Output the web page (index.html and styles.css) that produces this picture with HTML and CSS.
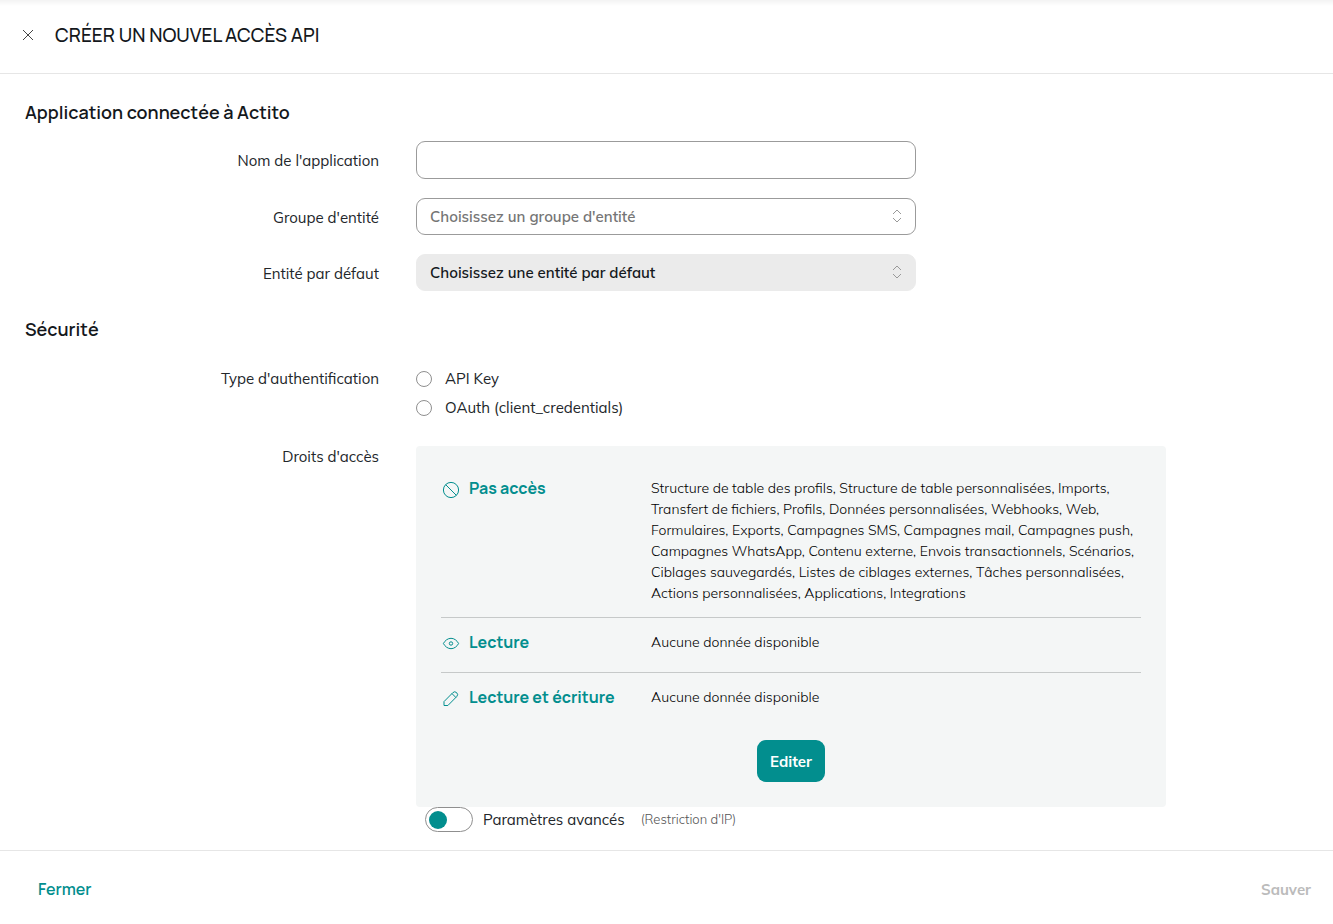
FILE: index.html
```
<!DOCTYPE html>
<html lang="fr">
<head>
    <meta charset="UTF-8">
    <meta name="viewport" content="width=device-width, initial-scale=1">
    <title>Créer un nouvel accès API</title>
    <link rel="stylesheet" href="styles.css">
</head>
<body>
<form class="page">
    <header class="header">
        <button type="button" class="close" aria-label="Fermer la fenêtre">
            <svg width="12" height="12" viewBox="0 0 12 12"><path d="M1 1l10 10M11 1L1 11"/></svg>
        </button>
        <h1>CRÉER UN NOUVEL ACCÈS API</h1>
    </header>

    <main class="content">
        <h2>Application connectée à Actito</h2>
        <div class="fields">
            <div class="row">
                <label class="label" for="name">Nom de l'application</label>
                <input type="text" id="name" class="control">
            </div>
            <div class="row">
                <label class="label" for="group">Groupe d'entité</label>
                <div class="select">
                    <select id="group" class="control">
                        <option>Choisissez un groupe d'entité</option>
                    </select>
                    <svg width="10" height="14" viewBox="0 0 10 14"><path d="M1 5l4-4 4 4M1 9l4 4 4-4"/></svg>
                </div>
            </div>
            <div class="row">
                <label class="label" for="entity">Entité par défaut</label>
                <div class="select">
                    <select id="entity" class="control" disabled>
                        <option>Choisissez une entité par défaut</option>
                    </select>
                    <svg width="10" height="14" viewBox="0 0 10 14"><path d="M1 5l4-4 4 4M1 9l4 4 4-4"/></svg>
                </div>
            </div>
        </div>

        <h2>Sécurité</h2>
        <div class="row auth" role="radiogroup" aria-labelledby="auth-label">
            <span class="label" id="auth-label">Type d'authentification</span>
            <div class="radios">
                <label><input type="radio" name="auth">API Key</label>
                <label><input type="radio" name="auth">OAuth (client_credentials)</label>
            </div>
        </div>
        <div class="row rights">
            <span class="label">Droits d'accès</span>
            <div>
                <div class="panel">
                    <dl>
                        <div class="right">
                            <dt>
                                <svg width="18" height="18" viewBox="0 0 18 18"><circle cx="9" cy="9" r="7.6"/><path d="M3.6 3.6l10.8 10.8"/></svg>
                                Pas accès
                            </dt>
                            <dd>Structure de table des profils, Structure de table personnalisées, Imports, Transfert de fichiers, Profils, Données personnalisées, Webhooks, Web, Formulaires, Exports, Campagnes SMS, Campagnes mail, Campagnes push, Campagnes WhatsApp, Contenu externe, Envois transactionnels, Scénarios, Ciblages sauvegardés, Listes de ciblages externes, Tâches personnalisées, Actions personnalisées, Applications, Integrations</dd>
                        </div>
                        <div class="right">
                            <dt>
                                <svg width="18" height="18" viewBox="0 0 18 18"><path d="M1.4 8.500C3 5.500 5.800 3.300 9 3.300S15 5.500 16.600 8.500C15 11.500 12.200 13.700 9 13.700S3 11.500 1.400 8.500z"/><circle cx="9" cy="8.500" r="1.700"/></svg>
                                Lecture
                            </dt>
                            <dd>Aucune donnée disponible</dd>
                        </div>
                        <div class="right">
                            <dt>
                                <svg width="18" height="18" viewBox="0 0 18 18"><path d="M2 15.500v-3.900L10.800 2.700a2.700 2.700 0 0 1 3.900 3.900L5.900 15.500zM10 3.600l3.900 3.900"/></svg>
                                Lecture et écriture
                            </dt>
                            <dd>Aucune donnée disponible</dd>
                        </div>
                    </dl>
                    <button type="button" class="edit">Editer</button>
                </div>
                <div class="advanced">
                    <input type="checkbox" id="advanced" class="switch">
                    <label for="advanced">Paramètres avancés</label>
                    <small>(Restriction d'IP)</small>
                </div>
            </div>
        </div>
    </main>

    <footer class="footer">
        <button type="button" class="cancel">Fermer</button>
        <button type="submit" class="save" disabled>Sauver</button>
    </footer>
</form>
</body>
</html>
```
FILE: styles.css
```
*{
    box-sizing: border-box;
}
body,h1,h2,dl,dd{
    margin: 0;
}
body{
    font: 15px/21px Mulish, "Open Sans", sans-serif;
    color: #22262a;
    background-color: #fff;
}
button,input,select{
    font: inherit;
    color: inherit;
}
button{
    padding: 0;
    border: 0;
    background: none;
}
svg{
    fill: none;
    stroke: currentColor;
    stroke-width: 1;
    flex: none;
}
.page{
    min-height: 100vh;
    display: flex;
    flex-direction: column;
}

.header{
    display: flex;
    align-items: center;
    gap: 21px;
    height: 74px;
    padding: 0 22px 3px;
    border-bottom: 1px solid #e6e6e6;
    background: linear-gradient(#f3f3f3, #fff 6px);
}
.close{
    display: flex;
    color: #444;
}
h1,h2,dt,.cancel{
    font-family: Manrope, Inter, sans-serif;
}
h1{
    font-size: 19px;
    line-height: 24px;
    font-weight: 500;
    color: #14181c;
}
h2{
    font-size: 18px;
    line-height: 24px;
    font-weight: 600;
    color: #14181c;
}

.content{
    flex: 1;
    padding: 26px 25px 18px;
}
.fields{
    display: grid;
    gap: 19px;
    margin: 17px 0 26px;
}
.row{
    display: grid;
    grid-template-columns: minmax(0, 354px) minmax(0, 750px);
    column-gap: 37px;
}
.label{
    text-align: right;
}
.fields .label{
    padding-top: 9px;
}
.control{
    width: 100%;
    max-width: 500px;
    height: 37px;
    padding: 0 13px;
    border: 1px solid #9b9b9b;
    border-radius: 9px;
    background-color: #fff;
}
input.control{
    height: 38px;
}
.select{
    position: relative;
    max-width: 500px;
}
.select svg{
    position: absolute;
    right: 14px;
    top: 11px;
    color: #999;
    pointer-events: none;
}
select.control{
    appearance: none;
    color: #757575;
    font-weight: 600;
}
select.control:disabled{
    border-color: #ebebeb;
    background-color: #ebebeb;
    color: #14181c;
    opacity: 1;
}

.auth{
    margin-top: 27px;
}
.radios{
    display: grid;
    gap: 8px;
}
.radios label{
    display: flex;
    align-items: center;
    gap: 13px;
}
.radios input{
    appearance: none;
    width: 16px;
    height: 16px;
    margin: 0;
    border: 1px solid #8f8f8f;
    border-radius: 50%;
}
.radios input:checked{
    border: 5px solid #028e8e;
}
.rights{
    margin-top: 28px;
}
.panel{
    padding: 18px 25px 25px;
    border-radius: 4px;
    background-color: #f4f6f6;
}
.right{
    display: grid;
    grid-template-columns: 210px minmax(0, 1fr);
    min-height: 55px;
    padding: 14px 0 13px;
    border-bottom: 1px solid #c6c9c9;
}
.right:last-child{
    border-bottom: 0;
}
dt{
    display: flex;
    align-items: flex-start;
    gap: 9px;
    padding-left: 1px;
    font-size: 16px;
    font-weight: 700;
    color: #028e8e;
}
dt svg{
    margin-top: 3px;
}
dd{
    font-size: 14px;
    font-weight: 300;
    color: #000;
}
.edit{
    display: block;
    height: 42px;
    margin: 12px auto 0;
    padding: 0 13px;
    border-radius: 9px;
    background-color: #028e8e;
    color: #fff;
    font-weight: 700;
}
.advanced{
    display: flex;
    align-items: center;
    padding-left: 9px;
}
.advanced label{
    margin: 0 16px 0 10px;
}
.advanced small{
    font-size: 13px;
    font-weight: 300;
    color: #555;
}
.switch{
    appearance: none;
    width: 48px;
    height: 25px;
    margin: 0;
    padding: 3px;
    border: 1px solid #8f8f8f;
    border-radius: 13px;
}
.switch::before{
    content: "";
    display: block;
    width: 18px;
    height: 18px;
    border-radius: 50%;
    background-color: #028e8e;
}
.switch:checked::before{
    margin-left: auto;
}

.footer{
    display: flex;
    justify-content: space-between;
    align-items: center;
    height: 74px;
    padding: 4px 22px 0 38px;
    border-top: 1px solid #e6e6e6;
}
.cancel{
    font-size: 16px;
    font-weight: 600;
    color: #028e8e;
}
.save{
    font-weight: 700;
    color: #bbb;
}
```
